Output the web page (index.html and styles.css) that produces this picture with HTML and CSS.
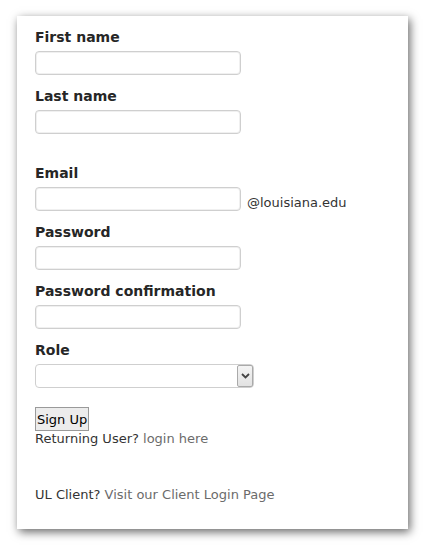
FILE: index.html
```html
<!DOCTYPE html>
<html>
<head>
<meta charset="utf-8">
<link rel="stylesheet" href="styles.css">
</head>
<body>
<div class="panel">
  <form class="form">
    <label class="label">First name</label>
    <input class="field" type="text">
    <label class="label">Last name</label>
    <input class="field" type="text">
    <label class="label label-gap">Email</label>
    <div class="email-row">
      <input class="field field-inline" type="text">
      <span class="domain">@louisiana.edu</span>
    </div>
    <label class="label">Password</label>
    <input class="field" type="password">
    <label class="label">Password confirmation</label>
    <input class="field" type="password">
    <label class="label">Role</label>
    <div class="select-wrap">
      <select class="select"></select>
      <span class="select-arrow">
        <svg width="9" height="6" viewBox="0 0 9 6"><path d="M1 1 L4.5 4.5 L8 1" fill="none" stroke="#444" stroke-width="1.8"/></svg>
      </span>
    </div>
    <button class="btn" type="button">Sign Up</button>
    <p class="line">Returning User? <a class="link" href="#">login here</a></p>
    <p class="line line-client">UL Client? <a class="link" href="#">Visit our Client Login Page</a></p>
  </form>
</div>
</body>
</html>
```
FILE: styles.css
```css
html, body {
  margin: 0;
  padding: 0;
  background: #fff;
}
body {
  padding: 16px 16px 16px 17px;
  min-height: 545px;
  box-sizing: border-box;
  font-family: "DejaVu Sans", Verdana, sans-serif;
  font-size: 13px;
  color: #333;
}
.panel {
  width: 391px;
  box-sizing: border-box;
  background: #fff;
  padding: 13px 18px 26px;
  box-shadow: 2px 3px 9px rgba(0,0,0,0.6);
}
.form {
  display: flex;
  flex-direction: column;
  align-items: flex-start;
  margin: 0;
}
.label {
  display: block;
  font-weight: bold;
  font-size: 14px;
  line-height: 16px;
  color: #262626;
  margin-bottom: 6px;
}
.label-gap {
  margin-top: 18px;
}
.field {
  width: 206px;
  height: 24px;
  box-sizing: border-box;
  border: 1px solid #cfcfcf;
  border-radius: 4px;
  box-shadow: inset 0 0 0 1px #f0f0f0;
  margin: 0 0 13px 0;
  padding: 2px 4px;
  font-family: inherit;
  font-size: 13px;
  background: #fff;
}
.email-row {
  display: flex;
  align-items: center;
  margin-bottom: 13px;
}
.field-inline {
  margin-bottom: 0;
}
.domain {
  margin-left: 6px;
  margin-top: 8px;
  line-height: 16px;
  color: #333;
}
.select-wrap {
  position: relative;
  width: 219px;
  height: 24px;
}
.select {
  display: block;
  width: 219px;
  height: 24px;
  box-sizing: border-box;
  border: 1px solid #cfcfcf;
  border-radius: 4px;
  background: #fff;
  appearance: none;
  -webkit-appearance: none;
  margin: 0;
}
.select-arrow {
  position: absolute;
  right: 1px;
  top: 1px;
  width: 16px;
  height: 22px;
  box-sizing: border-box;
  border: 1px solid #aaa;
  border-radius: 2px;
  background: linear-gradient(#f4f4f4, #e2e2e2);
  display: flex;
  align-items: center;
  justify-content: center;
}
.btn {
  margin-top: 19px;
  height: 24px;
  padding: 0 1px;
  border: 1px solid #9a9a9a;
  border-radius: 0;
  background: #ececec;
  font-family: "DejaVu Sans", Verdana, sans-serif;
  font-size: 13px;
  color: #000;
}
.line {
  margin: 0;
  line-height: 16px;
  color: #333;
}
.line-client {
  margin-top: 40px;
}
.link {
  color: #6b6b6b;
  text-decoration: none;
}
```
